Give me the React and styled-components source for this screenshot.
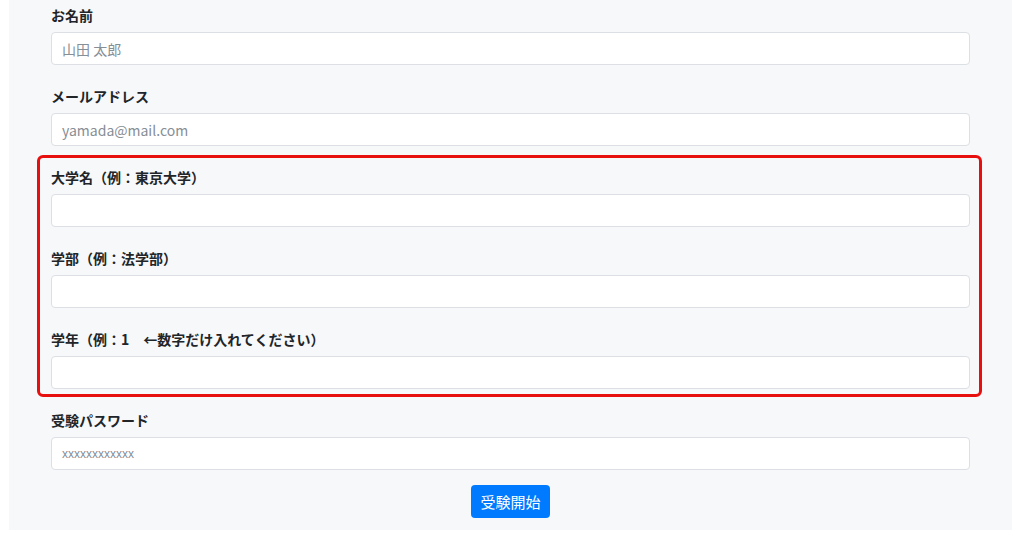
import React from 'react';
import styled, { createGlobalStyle } from 'styled-components';

const GlobalStyle = createGlobalStyle`
  html, body {
    margin: 0;
    padding: 0;
    background: #fff;
    font-family: "Noto Sans CJK JP", "Noto Sans", sans-serif;
    color: #212529;
  }
`;

const Panel = styled.div`
  margin-left: 9px;
  width: 1003px;
  box-sizing: border-box;
  background-color: #f7f8fa;
  padding: 5px 42px 12px 42px;
`;

const Field = styled.div`
  margin-bottom: ${(p) => (p.$last ? '15px' : '21px')};
`;

const Label = styled.label`
  display: block;
  font-size: 14px;
  font-weight: 700;
  line-height: 20px;
  margin-bottom: 7px;
  color: #212529;
`;

const Input = styled.input`
  display: block;
  width: 100%;
  height: 33px;
  box-sizing: border-box;
  padding: 0 10px;
  border: 1px solid #dcdfe3;
  border-radius: 4px;
  background: #fff;
  font-family: ${(p) => (p.$small ? '"Liberation Sans", sans-serif' : '"Noto Sans CJK JP", "Noto Sans", sans-serif')};
  font-size: ${(p) => (p.$small ? '12px' : '14px')};
  outline: none;

  &::placeholder {
    color: #868e96;
  }
`;

const Highlight = styled.div`
  margin: -12px -12px 13px -14px;
  padding: 9px 9px 5px 11px;
  border: 3px solid #e8100e;
  border-radius: 6px;

  & > ${Field}:last-child {
    margin-bottom: 0;
  }
`;

const ButtonRow = styled.div`
  display: flex;
  justify-content: center;
`;

const SubmitButton = styled.button`
  width: 79px;
  height: 33px;
  border: none;
  border-radius: 4px;
  background-color: #007bff;
  color: #fff;
  font-family: "Noto Sans CJK JP", sans-serif;
  font-size: 15px;
  cursor: pointer;
`;

const App = () => {
  return (
    <>
      <GlobalStyle />
      <Panel>
        <Field>
          <Label>お名前</Label>
          <Input placeholder="山田 太郎" />
        </Field>
        <Field>
          <Label>メールアドレス</Label>
          <Input placeholder="yamada@mail.com" />
        </Field>
        <Highlight>
          <Field>
            <Label>大学名（例：東京大学）</Label>
            <Input />
          </Field>
          <Field>
            <Label>学部（例：法学部）</Label>
            <Input />
          </Field>
          <Field>
            <Label>学年（例：1　←数字だけ入れてください）</Label>
            <Input />
          </Field>
        </Highlight>
        <Field $last>
          <Label>受験パスワード</Label>
          <Input $small placeholder="xxxxxxxxxxxx" />
        </Field>
        <ButtonRow>
          <SubmitButton>受験開始</SubmitButton>
        </ButtonRow>
      </Panel>
    </>
  );
};

export default App;
